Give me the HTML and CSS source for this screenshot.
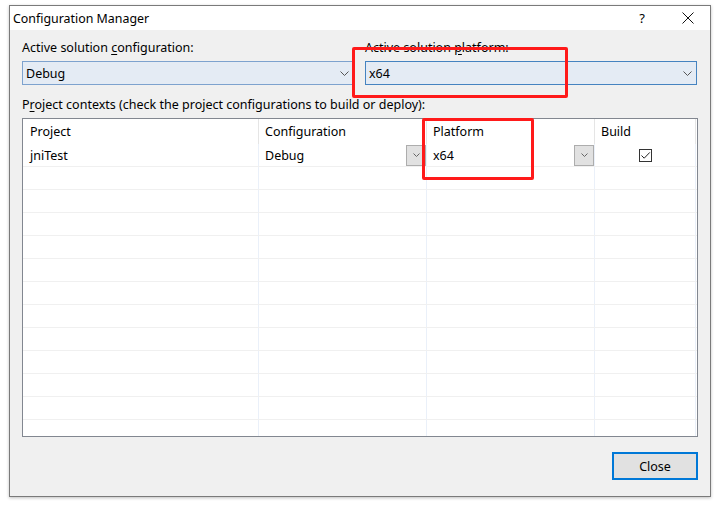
FILE: index.html
```html
<!DOCTYPE html>
<html>
<head>
<meta charset="utf-8">
<link rel="stylesheet" href="styles.css">
</head>
<body>
<div class="stage">
  <div class="window">
    <div class="titlebar">
      <span class="title">Configuration Manager</span>
      <span class="tb-help">?</span>
      <svg class="tb-close" width="12" height="12" viewBox="0 0 12 12"><path d="M0.5 0.5 L11.5 11.5 M11.5 0.5 L0.5 11.5" stroke="#111" stroke-width="1" fill="none"/></svg>
    </div>
    <div class="client">
      <div class="top">
        <div class="field">
          <div class="label">Active solution <u>c</u>onfiguration:</div>
          <div class="combo"><span>Debug</span><svg class="chev" width="9" height="5" viewBox="0 0 9 5"><path d="M0.5 0.5 L4.5 4.5 L8.5 0.5" stroke="#555" fill="none"/></svg></div>
        </div>
        <div class="field">
          <div class="label">Active solution <u>p</u>latform:</div>
          <div class="combo combo-active"><span>x64</span><svg class="chev" width="9" height="5" viewBox="0 0 9 5"><path d="M0.5 0.5 L4.5 4.5 L8.5 0.5" stroke="#555" fill="none"/></svg></div>
        </div>
      </div>
      <div class="label label-ctx">P<u>r</u>oject contexts (check the project configurations to build or deploy):</div>
      <div class="grid">
        <div class="row head">
          <div class="cell">Project</div>
          <div class="cell">Configuration</div>
          <div class="cell">Platform</div>
          <div class="cell">Build</div>
        </div>
        <div class="row">
          <div class="cell"><span class="txt">jniTest</span></div>
          <div class="cell drop"><span class="txt">Debug</span><span class="dbtn"><svg width="7" height="4" viewBox="0 0 7 4"><path d="M0.5 0.5 L3.5 3.5 L6.5 0.5" stroke="#666" fill="none"/></svg></span></div>
          <div class="cell drop"><span class="txt">x64</span><span class="dbtn"><svg width="7" height="4" viewBox="0 0 7 4"><path d="M0.5 0.5 L3.5 3.5 L6.5 0.5" stroke="#666" fill="none"/></svg></span></div>
          <div class="cell center"><span class="check"><svg width="11" height="11" viewBox="0 0 11 11"><path d="M1.5 5.5 L4.2 8.2 L9.8 2.4" stroke="#222" stroke-width="1" fill="none"/></svg></span></div>
        </div>
        <div class="row"><div class="cell"></div><div class="cell"></div><div class="cell"></div><div class="cell"></div></div>
        <div class="row"><div class="cell"></div><div class="cell"></div><div class="cell"></div><div class="cell"></div></div>
        <div class="row"><div class="cell"></div><div class="cell"></div><div class="cell"></div><div class="cell"></div></div>
        <div class="row"><div class="cell"></div><div class="cell"></div><div class="cell"></div><div class="cell"></div></div>
        <div class="row"><div class="cell"></div><div class="cell"></div><div class="cell"></div><div class="cell"></div></div>
        <div class="row"><div class="cell"></div><div class="cell"></div><div class="cell"></div><div class="cell"></div></div>
        <div class="row"><div class="cell"></div><div class="cell"></div><div class="cell"></div><div class="cell"></div></div>
        <div class="row"><div class="cell"></div><div class="cell"></div><div class="cell"></div><div class="cell"></div></div>
        <div class="row"><div class="cell"></div><div class="cell"></div><div class="cell"></div><div class="cell"></div></div>
        <div class="row"><div class="cell"></div><div class="cell"></div><div class="cell"></div><div class="cell"></div></div>
        <div class="row"><div class="cell"></div><div class="cell"></div><div class="cell"></div><div class="cell"></div></div>
        <div class="row"><div class="cell"></div><div class="cell"></div><div class="cell"></div><div class="cell"></div></div>
      </div>
      <div class="footer">
        <button class="btn">Close</button>
      </div>
    </div>
  </div>
  <div class="mark mark-1"></div>
  <div class="mark mark-2"></div>
</div>
</body>
</html>
```

FILE: styles.css
```css
html, body {
  margin: 0;
  padding: 0;
  background: #ffffff;
}
body {
  font-family: "Noto Sans", "Liberation Sans", sans-serif;
  font-size: 12.5px;
  color: #000;
}
.stage {
  position: relative;
  width: 719px;
  height: 507px;
  padding: 5px 0 0 9px;
  box-sizing: border-box;
}
.window {
  width: 702px;
  height: 492px;
  border: 1px solid #7a7a7a;
  box-sizing: border-box;
  background: #f0f0f0;
  box-shadow: 0 1px 3px rgba(0,0,0,0.25);
  display: flex;
  flex-direction: column;
}
.titlebar {
  height: 24px;
  background: #ffffff;
  display: flex;
  align-items: center;
  padding-left: 3px;
  flex: none;
}
.title {
  font-size: 12.4px;
  flex: 1;
  line-height: 24px;
  padding-top: 1px;
}
.tb-help {
  font-size: 13px;
  margin-right: 37px;
}
.tb-close {
  margin-right: 16px;
}
.client {
  flex: 1;
  padding: 0 12px;
  display: flex;
  flex-direction: column;
}
.top {
  display: grid;
  grid-template-columns: 332px 332px;
  column-gap: 11px;
  margin-top: 10px;
}
.label {
  line-height: 16px;
  height: 16px;
  white-space: nowrap;
}
.label u { text-underline-offset: 2px; }
.combo {
  margin-top: 5px;
  height: 24px;
  box-sizing: border-box;
  border: 1px solid #7da2ce;
  background: #e4ebf4;
  display: flex;
  align-items: center;
  padding-left: 3px;
  padding-right: 4px;
}
.combo-active {
  border-color: #4583c0;
}
.combo span { flex: 1; }
.chev { flex: none; }
.label-ctx {
  margin-top: 12px;
}
.grid {
  margin-top: 5px;
  height: 319px;
  width: 676px;
  box-sizing: border-box;
  border: 1px solid #828790;
  background: #fff;
  overflow: hidden;
  flex: none;
}
.row {
  display: grid;
  grid-template-columns: 236px 168px 168px 101px;
  height: 23px;
  box-sizing: border-box;
  border-bottom: 1px solid #f0f0f0;
}
.row.head {
  height: 25px;
  border-bottom: none;
}
.cell {
  box-sizing: border-box;
  border-right: 1px solid #eaf0f9;
  padding-left: 6px;
  display: flex;
  align-items: center;
  position: relative;
  line-height: 16px;
}
.row .cell:first-child { padding-left: 7px; }
.head .cell { border-right-color: #e5e5e5; }
.txt { padding-top: 2px; }
.drop { justify-content: space-between; }
.dbtn {
  width: 20px;
  height: 21px;
  box-sizing: border-box;
  border: 1px solid #adadad;
  background: #e1e1e1;
  display: flex;
  align-items: center;
  justify-content: center;
}
.center { justify-content: center; padding-left: 0; padding-top: 1px; }
.check {
  width: 13px;
  height: 13px;
  box-sizing: border-box;
  border: 1px solid #333;
  display: flex;
  align-items: center;
  justify-content: center;
  background: #fff;
}
.footer {
  display: flex;
  justify-content: flex-end;
  margin-top: 15px;
}
.btn {
  width: 86px;
  height: 28px;
  box-sizing: border-box;
  border: 2px solid #0078d7;
  background: #e1e1e1;
  font-family: "Noto Sans", "Liberation Sans", sans-serif;
  font-size: 12.5px;
  color: #000;
  padding: 0;
}
.mark {
  position: absolute;
  border: 3px solid #ff1a1a;
  border-radius: 2px;
  box-sizing: border-box;
}
.mark-1 {
  left: 352px;
  top: 47px;
  width: 216px;
  height: 51px;
}
.mark-2 {
  left: 422px;
  top: 118px;
  width: 112px;
  height: 62px;
}
```
